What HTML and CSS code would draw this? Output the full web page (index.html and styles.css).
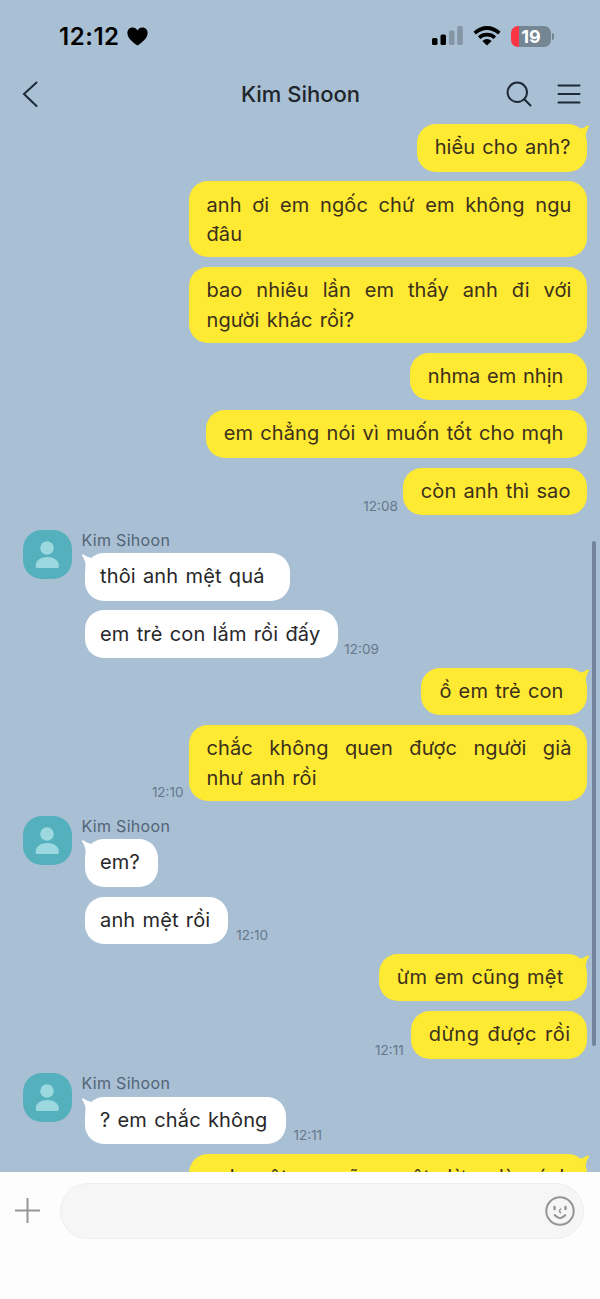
FILE: index.html
```html
<!DOCTYPE html>
<html lang="vi">
<head>
<meta charset="utf-8">
<title>Kim Sihoon</title>
<link rel="stylesheet" href="styles.css">
</head>
<body>
<svg class="defs" width="0" height="0">
  <symbol id="person" viewBox="0 0 49 49"><circle cx="24" cy="18" r="6.800"/><path d="M12.800 36.700V35.500C12.800 30 18 27 24.200 27S35.800 30 35.800 35.500V36.700Q35.800 38 34.500 38H14.100Q12.800 38 12.800 36.700Z"/></symbol>
  <symbol id="tail-in" viewBox="0 0 14 14"><path d="M0 1.200Q0-.2 1.400.6Q5 3.200 8.500 3.500L14 10L3.500 14Q4 7 0 1.200Z"/></symbol>
  <symbol id="tail-out" viewBox="0 0 14 14"><path d="M14 1.200Q14-.2 12.600.6Q9 3.200 5.500 3.500L0 10L10.500 14Q10.500 7 14 1.200Z"/></symbol>
</svg>
<div class="screen">
  <header class="status">
    <div class="clock">12:12<svg width="21" height="19" viewBox="0 0 21 19"><path d="M10.500 18.400C6.500 16 .4 11.500.4 6C.4 2.700 2.700.5 5.500.5C7.800.5 9.500 1.700 10.500 3.400C11.500 1.700 13.200.5 15.500.5C18.300.5 20.600 2.700 20.600 6C20.600 11.500 14.500 16 10.500 18.400Z"/></svg></div>
    <div class="indicators">
      <svg width="31" height="20" viewBox="0 0 31 20"><rect x="0" y="12" width="5.500" height="7" rx="1.500"/><rect x="8.500" y="8.500" width="5.500" height="10.500" rx="1.500"/><g fill="#8495a6"><rect x="17" y="4.500" width="5.500" height="14.500" rx="1.500"/><rect x="25.300" y="0" width="5.500" height="19" rx="1.500"/></g></svg>
      <svg class="wifi" width="28" height="20" viewBox="0 0 28 20"><g fill="none" stroke="#000" stroke-width="3.800"><path d="M1.700 7.100Q7.300 2 14 2T26.300 7.100"/><path d="M6.100 11.600Q9.500 8.700 14 8.700T21.900 11.600"/></g><path d="M9.300 15Q14 11.200 18.700 15L14 19.600Z"/></svg>
      <div class="battery"><span>19</span></div><i class="nub"></i>
    </div>
  </header>
  <nav class="bar">
    <svg width="18" height="28" viewBox="0 0 18 28"><path d="M15.500 2.500L3 14L15.500 26"/></svg>
    <h1>Kim Sihoon</h1>
    <div class="tools">
      <svg width="26" height="27" viewBox="0 0 26 27"><circle cx="11.300" cy="11.300" r="9.700"/><path d="M18.300 18.300L24.500 24.500"/></svg>
      <svg width="24" height="22" viewBox="0 0 24 22"><path d="M1.500 2.500H22.500M1.500 11H22.500M1.500 19.500H22.500"/></svg>
    </div>
  </nav>
  <main class="chat">
    <div class="row out"><p class="bubble first">hiểu cho anh?<svg class="tail"><use href="#tail-out"/></svg></p></div>
    <div class="row out"><p class="bubble wide">anh ơi em ngốc chứ em không ngu đâu</p></div>
    <div class="row out"><p class="bubble wide">bao nhiêu lần em thấy anh đi với người khác rồi?</p></div>
    <div class="row out"><p class="bubble spaced tight">nhma em nhịn</p></div>
    <div class="row out"><p class="bubble spaced">em chẳng nói vì muốn tốt cho mqh</p></div>
    <div class="row out"><time>12:08</time><p class="bubble">còn anh thì sao</p></div>

    <section class="group">
      <svg class="avatar"><use href="#person"/></svg>
      <div class="stack">
        <h2>Kim Sihoon</h2>
        <div class="row"><p class="bubble first spaced">thôi anh mệt quá<svg class="tail"><use href="#tail-in"/></svg></p></div>
        <div class="row"><p class="bubble">em trẻ con lắm rồi đấy</p><time>12:09</time></div>
      </div>
    </section>

    <div class="row out"><p class="bubble first spaced">ồ em trẻ con<svg class="tail"><use href="#tail-out"/></svg></p></div>
    <div class="row out"><time>12:10</time><p class="bubble wide">chắc không quen được người già như&nbsp;anh rồi</p></div>

    <section class="group">
      <svg class="avatar"><use href="#person"/></svg>
      <div class="stack">
        <h2>Kim Sihoon</h2>
        <div class="row"><p class="bubble first">em?<svg class="tail"><use href="#tail-in"/></svg></p></div>
        <div class="row"><p class="bubble">anh mệt rồi</p><time class="apart">12:10</time></div>
      </div>
    </section>

    <div class="row out"><p class="bubble first spaced loose">ừm em cũng mệt<svg class="tail"><use href="#tail-out"/></svg></p></div>
    <div class="row out"><time class="apart">12:11</time><p class="bubble looser">dừng được rồi</p></div>

    <section class="group">
      <svg class="avatar"><use href="#person"/></svg>
      <div class="stack">
        <h2>Kim Sihoon</h2>
        <div class="row"><p class="bubble first">? em chắc không<svg class="tail"><use href="#tail-in"/></svg></p><time class="apart">12:11</time></div>
      </div>
    </section>

    <div class="row out"><p class="bubble first wide full">anh mệt em cũng mệt dừng là cách<svg class="tail"><use href="#tail-out"/></svg></p></div>
    <div class="scroll"></div>
  </main>
  <footer class="composer">
    <svg class="plus" width="25" height="25" viewBox="0 0 25 25"><path d="M12.500.5V24.500M.5 12.500H24.500"/></svg>
    <div class="field">
      <svg width="30" height="30" viewBox="0 0 30 30"><circle cx="15" cy="15" r="13.700"/><path d="M9.500 11V13M20.500 11V13" stroke-width="2.400"/><path d="M15.700 13Q13.300 15 15.500 16.700" stroke-width="1.500"/><path d="M9.700 19Q15 25.300 20.300 19"/></svg>
    </div>
  </footer>
</div>
</body>
</html>
```
FILE: styles.css
```css
* { box-sizing: border-box; }
body { margin: 0; font-family: Inter, "Noto Sans", sans-serif; background: #fdfdfd; }
h1, h2, p { margin: 0; font-weight: 400; }
.defs { position: absolute; }
.screen { width: 600px; height: 1299px; display: flex; flex-direction: column; background: #a9bfd4; overflow: hidden; }

.status { height: 72px; flex: none; display: flex; justify-content: space-between; align-items: center; padding: 0 46px 0 59px; }
.clock { display: flex; align-items: center; gap: 7px; font-size: 24px; font-weight: 600; letter-spacing: .55px; }
.indicators { display: flex; align-items: center; }
.wifi { margin-left: 10px; }
.battery { width: 40px; height: 21px; margin-left: 10px; border-radius: 7px; background: linear-gradient(90deg, #fb3544 8px, #748594 8px); color: #fff; font-size: 18px; font-weight: 700; line-height: 21px; text-align: center; }
.nub { width: 2px; height: 7px; margin-left: 1px; border-radius: 0 2px 2px 0; background: #748594; }

.bar { height: 52px; flex: none; display: grid; grid-template-columns: 1fr auto 1fr; align-items: center; padding: 0 19px 8px 21px; }
.bar svg { fill: none; stroke: #1d2935; stroke-width: 2; stroke-linecap: round; }
.bar h1 { font-size: 22px; font-weight: 500; color: #20252b; margin-right: 1px; }
.tools { display: flex; justify-content: flex-end; align-items: center; gap: 25px; }

.chat { position: relative; flex: none; height: 1048px; display: flex; flex-direction: column; gap: 9.900px; overflow: hidden; }
.row { flex: none; display: flex; align-items: flex-end; }
.out { justify-content: flex-end; padding-right: 13.500px; }
.bubble { position: relative; min-height: 47.500px; padding: 9.200px 16px 8px 18px; border-radius: 19px; background: #fee933; color: #3b301b; font-size: 20px; line-height: 29.300px; letter-spacing: .1px; word-spacing: 1.400px; }
.tight { letter-spacing: .05px; word-spacing: 1px; }
.loose { letter-spacing: .25px; }
.looser { letter-spacing: .5px; word-spacing: 2px; }
.spaced { padding-right: 23px; }
.wide { width: 398px; padding-right: 15px; text-align: justify; }
.full { text-align-last: justify; }
.tail { position: absolute; top: 1px; right: -2px; width: 14px; height: 14px; fill: #fee933; }
time { color: #65788b; font-size: 13.500px; line-height: 17px; margin: 0 6px; }
.out time { margin: 0 5px; }
.apart { margin-left: 8px; }
.out .apart { margin-right: 7px; }

.group { flex: none; margin-top: 4.800px; display: flex; padding-left: 22.500px; }
.avatar { width: 49px; height: 49px; border-radius: 19px; background: #53b0bc; fill: #9bd8df; }
.stack { display: flex; flex-direction: column; gap: 9.900px; padding-left: 13.500px; }
.stack h2 { height: 23.400px; margin: 0 0 -9.900px -3.500px; color: #536475; font-size: 16px; line-height: 21px; letter-spacing: .3px; }
.group .bubble { background: #fff; color: #272729; padding-left: 15px; padding-right: 18px; letter-spacing: .15px; }
.group .spaced { padding-right: 25px; }
.group .tail { left: -3px; right: auto; fill: #fff; }
.scroll { position: absolute; top: 417px; right: 4px; width: 4px; height: 505px; border-radius: 2px; background: #72859a; }

.composer { flex: 1; display: flex; align-items: flex-start; padding: 11px 16px 0 15px; background: #fdfdfd; }
.composer svg { fill: none; stroke: #969696; stroke-width: 2; stroke-linecap: round; }
.plus { margin-top: 15px; }
.field { flex: 1; height: 56px; margin-left: 20px; border: 1px solid #eeeef0; border-radius: 28px; background: #f6f6f7; display: flex; justify-content: flex-end; align-items: center; padding-right: 8px; }
```
